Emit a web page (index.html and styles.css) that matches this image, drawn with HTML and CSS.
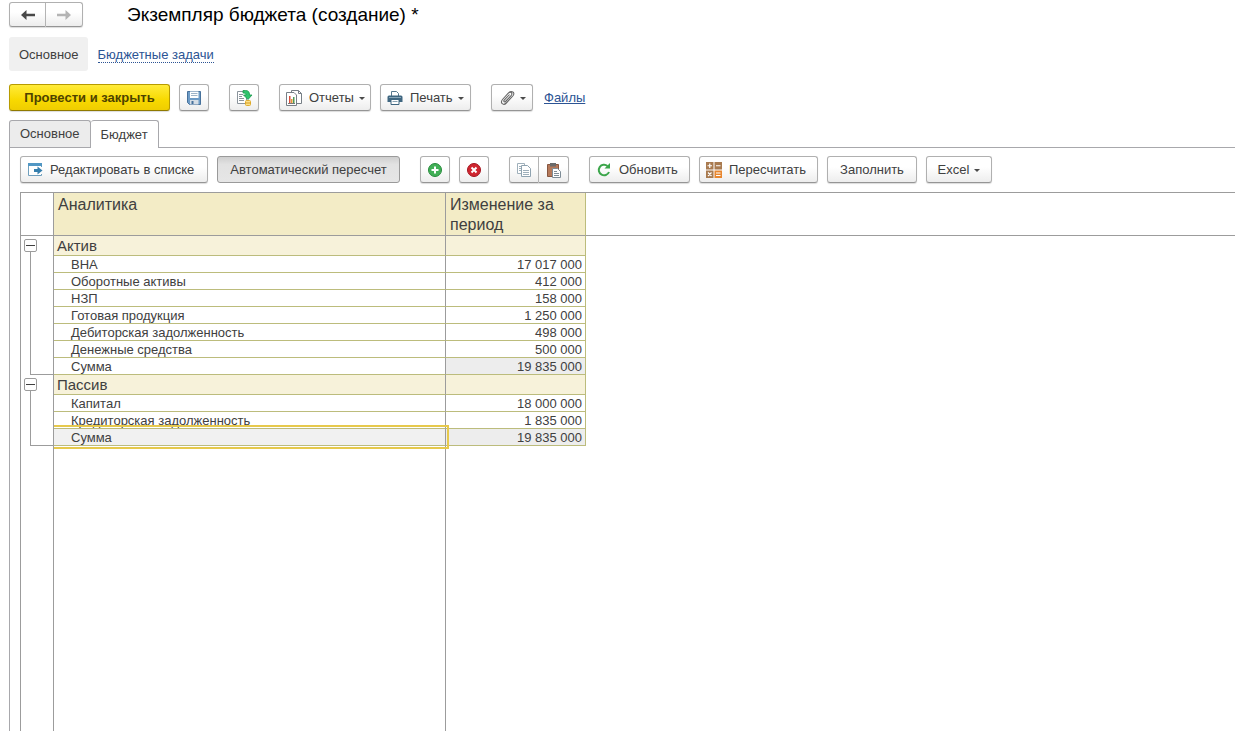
FILE: index.html
```
<!DOCTYPE html>
<html lang="ru">
<head>
<meta charset="utf-8">
<title>Экземпляр бюджета (создание) *</title>
<link rel="stylesheet" href="styles.css">
</head>
<body>
<header class="titlebar">
  <div class="btn-group">
    <button class="btn history" type="button" aria-label="Назад"><svg width="14" height="10" viewBox="0 0 14 10"><path d="M5.500 0 0 5l5.500 5V6.200H14V3.800H5.500z" fill="#484848"/></svg></button>
    <button class="btn history" type="button" aria-label="Вперед"><svg width="14" height="10" viewBox="0 0 14 10"><path d="M8.500 0 14 5l-5.500 5V6.200H0V3.800h8.500z" fill="#b4b4b4"/></svg></button>
  </div>
  <h1>Экземпляр бюджета (создание) *</h1>
</header>

<nav class="sections">
  <span class="section-current">Основное</span>
  <a href="#">Бюджетные задачи</a>
</nav>

<div class="toolbar commands">
  <button class="btn primary" type="button">Провести и закрыть</button>
  <button class="btn square" type="button" aria-label="Записать"><svg width="16" height="16" viewBox="0 0 16 16"><path d="M1.500 1.500h13v13h-11l-2-2z" fill="#6d9bc6" stroke="#47719b"/><path d="M4 1.500h8.500V8H4z" fill="#fff"/><path d="M5 3.500h6.500M5 5.500h6.500" stroke="#9fb4c8"/><path d="M4 10h8.500v4.500H4z" fill="#d5dde5"/><path d="M5.500 11h2v3h-2z" fill="#47719b"/></svg></button>
  <button class="btn square push" type="button" aria-label="Провести"><svg width="18" height="18" viewBox="0 0 18 18"><path d="M2.500 2.500h9v12h-9z" fill="#fff" stroke="#8b949c"/><path d="M4 5.500h4M4 7.500h3M4 9.500h5M4 11.500h5" stroke="#8b949c"/><path d="M8 1.500h2.500c3 0 4 1.500 4 4.500H17l-4 4.500L8.500 6H11c0-1.500-1-2-3-2z" fill="#2fc46c" stroke="#1b984d" stroke-width=".8"/><rect x="10.500" y="11.500" width="5" height="5" rx="1" fill="#fbe08a" stroke="#e0ae31"/><path d="M10.500 14h5" stroke="#d69b1e"/></svg></button>
  <button class="btn reports push" type="button"><svg width="16" height="16" viewBox="0 0 16 16"><path d="M5.500.5h7l3 3v10h-10z" fill="#fff" stroke="#777f86"/><path d="M12.500.5v3h3" fill="none" stroke="#777f86"/><path d="M.5 2.500h7.500l2.500 2.500v10.500H.5z" fill="#fff" stroke="#777f86"/><path d="M3 6h1.500v7H3z" fill="#d94d3a"/><path d="M5 9h1.500v4H5z" fill="#e39a36"/><path d="M7 7h1.500v6H7z" fill="#4e9a57"/><path d="M2 13.500h7" stroke="#777"/></svg><span>Отчеты</span><i class="caret"></i></button>
  <button class="btn print" type="button"><svg width="16" height="16" viewBox="0 0 16 16"><path d="M4.500 6V1.500h5l2 2V6" fill="#fff" stroke="#56788e"/><path d="M2 5.500h12q1.500 0 1.500 1.500V12H.5V7Q.5 5.500 2 5.500z" fill="#3f6680"/><path d="M2 7.500h12" stroke="#86a5b8"/><path d="M4 9.500h8v5H4z" fill="#fff" stroke="#3f6680"/><path d="M5.500 11.500h5" stroke="#8aa4b4"/></svg><span>Печать</span><i class="caret"></i></button>
  <button class="btn attach push" type="button" aria-label="Присоединить"><svg width="16" height="16" viewBox="0 0 16 16"><path d="M3.500 9.500l6-6.500c2-2 4.500.3 2.800 2.300L6.500 11.500c-1 1-2.300-.2-1.300-1.300L10.500 4.500M3.500 9.500c-3 3.500 1 6.500 3.800 3.500l6.500-7C17 2 12 .5 10 2.500" fill="none" stroke="#666" stroke-width="1.100"/></svg><i class="caret"></i></button>
  <a class="files" href="#">Файлы</a>
</div>

<div class="tabs" role="tablist">
  <button class="tab" type="button" role="tab" aria-selected="false">Основное</button>
  <button class="tab active" type="button" role="tab" aria-selected="true">Бюджет</button>
</div>

<main class="panel">
  <div class="toolbar">
    <button class="btn edit" type="button"><svg width="16" height="16" viewBox="0 0 16 16"><path d="M14.500 5V1.500H1.500v12h13V12" fill="#fff" stroke="#6f9fbd"/><path d="M1 1h14v3H1z" fill="#5197c4"/><path d="M7 7h3.500V4.500L15.500 8.500l-5 4V10H7z" fill="#367fae"/></svg><span>Редактировать в списке</span></button>
    <button class="btn auto pressed" type="button" aria-pressed="true">Автоматический пересчет</button>
    <button class="btn square push" type="button" aria-label="Добавить"><svg width="16" height="16" viewBox="0 0 16 16"><circle cx="8" cy="8" r="6.500" fill="#42b057" stroke="#278b3c"/><path d="M8 4.500v7M4.500 8h7" stroke="#fff" stroke-width="2"/></svg></button>
    <button class="btn square" type="button" aria-label="Удалить"><svg width="16" height="16" viewBox="0 0 16 16"><circle cx="8" cy="8" r="6.500" fill="#cf2630" stroke="#a5141e"/><path d="M5.500 5.500l5 5M10.500 5.500l-5 5" stroke="#fff" stroke-width="2"/></svg></button>
    <div class="btn-group push">
      <button class="btn square" type="button" aria-label="Копировать"><svg width="16" height="16" viewBox="0 0 16 16"><path d="M1.500 1.500h7v10h-7z" fill="#fff" stroke="#9fb0bb"/><path d="M3 4.500h3M3 6.500h3M3 8.500h3" stroke="#9fb0bb"/><path d="M5.500 3.500h6l3 3v8h-9z" fill="#fff" stroke="#8fa3b0"/><path d="M7 8.500h6M7 10.500h6M7 12.500h6" stroke="#9fb0bb"/></svg></button>
      <button class="btn square" type="button" aria-label="Вставить"><svg width="16" height="16" viewBox="0 0 16 16"><path d="M1.500 2.500h11v12h-11z" fill="#b5795a" stroke="#875640"/><path d="M4 1h6v3.500H4z" fill="#6b6b6b"/><path d="M6.500 6.500h5l3 3v6h-8z" fill="#fff" stroke="#7e8c96"/><path d="M8 9.500h3M8 11.500h5M8 13.500h5" stroke="#7e8c96"/></svg></button>
    </div>
    <button class="btn refresh push" type="button"><svg width="16" height="16" viewBox="0 0 16 16"><path d="M13 10A5.300 5.300 0 1 1 11.500 4" fill="none" stroke="#3ca64b" stroke-width="2"/><path d="M8.500 6.500h5.500V1z" fill="#3ca64b"/></svg><span>Обновить</span></button>
    <button class="btn recount" type="button"><svg width="16" height="16" viewBox="0 0 16 16"><path d="M0 0h7.500v7.500H0zM8.500 0H16v7.500H8.500zM0 8.500h7.500V16H0z" fill="#a97b50"/><path d="M8.500 8.500H16V16H8.500z" fill="#e8862e"/><path d="M3.750 1.500v4.500M1.500 3.750h4.500M10 3.750h4.500M2 10.500l3.500 3.500M5.500 10.500L2 14M10 11h4.500M10 13.500h4.500" stroke="#fff" stroke-width="1.200"/></svg><span>Пересчитать</span></button>
    <button class="btn fill" type="button">Заполнить</button>
    <button class="btn excel" type="button"><span>Excel</span><i class="caret"></i></button>
  </div>

  <div class="sheet">
    <table>
      <colgroup><col class="col-gutter"><col class="col-name"><col class="col-value"><col></colgroup>
      <thead>
        <tr><td class="gutter-head"></td><th scope="col">Аналитика</th><th scope="col">Изменение за период</th><td class="blank-head"></td></tr>
      </thead>
      <tbody>
        <tr class="group"><td class="gutter" rowspan="8"><div class="outline outline-long"><button type="button" aria-label="Свернуть Актив"></button></div></td><th scope="rowgroup">Актив</th><td></td></tr>
        <tr><td>ВНА</td><td>17 017 000</td></tr>
        <tr><td>Оборотные активы</td><td>412 000</td></tr>
        <tr><td>НЗП</td><td>158 000</td></tr>
        <tr><td>Готовая продукция</td><td>1 250 000</td></tr>
        <tr><td>Дебиторская задолженность</td><td>498 000</td></tr>
        <tr><td>Денежные средства</td><td>500 000</td></tr>
        <tr><td>Сумма</td><td class="total">19 835 000</td></tr>
      </tbody>
      <tbody>
        <tr class="group"><td class="gutter" rowspan="4"><div class="outline outline-short"><button type="button" aria-label="Свернуть Пассив"></button></div></td><th scope="rowgroup">Пассив</th><td></td></tr>
        <tr><td>Капитал</td><td>18 000 000</td></tr>
        <tr><td>Кредиторская задолженность</td><td>1 835 000</td></tr>
        <tr><td class="total selected">Сумма</td><td class="total">19 835 000</td></tr>
      </tbody>
    </table>
    <div class="sheet-rest"><div></div><div></div></div>
  </div>
</main>
</body>
</html>
```
FILE: styles.css
```
* { box-sizing: border-box; }

body {
  margin: 0;
  min-height: 100vh;
  display: flex;
  flex-direction: column;
  padding-left: 9px;
  background: #fff;
  color: #404040;
  font: 13px/16px "Liberation Sans", Arial, sans-serif;
  overflow-x: hidden;
}

button { font: inherit; color: inherit; }
a { color: #2c5494; }

.titlebar {
  display: flex;
  align-items: center;
  gap: 44px;
  padding-top: 2px;
}
h1 {
  margin: 0;
  color: #000;
  font-size: 19px;
  font-weight: 400;
  line-height: 24px;
}

.sections {
  display: flex;
  align-items: center;
  gap: 10px;
  padding: 10px 0 13px;
}
.section-current {
  padding: 10px 9px 8px 10px;
  border-radius: 3px;
  background: #f0f0f0;
}
.sections a {
  padding-top: 2px;
  border-bottom: 1px dotted #2c5494;
  line-height: 14px;
  text-decoration: none;
}

.toolbar {
  display: flex;
  align-items: center;
  gap: 9px;
}
.push { margin-left: 11px; }

.btn {
  display: flex;
  align-items: center;
  justify-content: center;
  height: 27px;
  padding: 0 6px;
  border: 1px solid #b0b0b0;
  border-bottom-color: #959595;
  border-radius: 3px;
  background: linear-gradient(#fff 40%, #ededed);
  box-shadow: 0 1px 1px #dcdcdc;
  white-space: nowrap;
}
.btn svg { flex: none; }
.btn svg + span { margin-left: 7px; }
.square { width: 30px; padding: 0; }
.history { width: 37px; height: 25px; padding: 0; }
.btn-group { display: flex; }
.btn-group .btn:first-child { border-radius: 3px 0 0 3px; }
.btn-group .btn:last-child { border-radius: 0 3px 3px 0; border-left: 0; }

.primary {
  min-width: 161px;
  border-color: #b79b00;
  border-bottom-color: #8f7900;
  background: linear-gradient(#ffeb3a, #f8d900 60%, #efcd00);
  color: #4d4200;
  font-weight: 700;
}
.reports { min-width: 92px; }
.print { min-width: 91px; }
.attach { min-width: 42px; }
.files { margin-left: 2px; }
.edit { min-width: 188px; }
.auto { min-width: 183px; }
.refresh { min-width: 101px; }
.recount { min-width: 119px; }
.fill { min-width: 90px; }
.excel { min-width: 66px; }
.edit, .refresh, .recount, .reports, .print { justify-content: flex-start; }
.pressed {
  border-color: #9a9a9a;
  background: linear-gradient(#cfcfcf, #e2e2e2 30%, #e6e6e6);
  box-shadow: none;
}

.caret {
  margin: 2px 0 0 5px;
  border: 3px solid transparent;
  border-top-color: #4a4a4a;
  border-bottom: 0;
}
.reports, .print { padding-right: 5px; }

.tabs {
  display: flex;
  padding-top: 9px;
}
.tab {
  height: 27px;
  padding: 0 10px;
  border: 1px solid #a8a8ac;
  border-bottom: 0;
  border-radius: 3px 3px 0 0;
  background: #ececec;
}
.tab + .tab { border-left: 0; }
.tab.active {
  position: relative;
  height: 28px;
  margin-bottom: -1px;
  background: #fff;
}

.panel {
  flex: 1;
  display: flex;
  flex-direction: column;
  gap: 9px;
  padding: 8px 0 0 10px;
  border: solid #a8a8ac;
  border-width: 1px 0 0 1px;
}

.sheet {
  flex: 1;
  display: flex;
  flex-direction: column;
  border: solid #9c9c9c;
  border-width: 1px 0 0 1px;
}
table {
  width: 100%;
  table-layout: fixed;
  border-collapse: separate;
  border-spacing: 0;
}
.col-gutter { width: 33px; }
.col-name { width: 392px; }
.col-value { width: 140px; }

th, td {
  padding: 0;
  border: 0 solid #bcbc7c;
  font-weight: 400;
  text-align: left;
}
thead th {
  height: 43px;
  padding: 2px 4px 0;
  border-width: 0 1px 1px 0;
  border-bottom-color: #9c9c9c;
  background: #f3ecc6;
  font-size: 16px;
  line-height: 20px;
  vertical-align: top;
}
thead th:nth-child(2) { border-right-color: #9c9c9c; }
.gutter-head { border: solid #9c9c9c; border-width: 0 1px 1px 0; }
.blank-head { border-bottom: 1px solid #9c9c9c; }

tbody td {
  height: 17px;
  padding-top: 2px;
  border-width: 0 1px 1px 0;
  line-height: 14px;
}
tbody td:nth-last-child(2) { padding-left: 17px; border-right-color: #9c9c9c; }
tbody td:last-child { padding-right: 3px; text-align: right; }
.group th, .group td:last-child {
  height: 20px;
  border-width: 0 1px 1px 0;
  background: #f7f2da;
}
.group th {
  padding-left: 3px;
  border-right-color: #9c9c9c;
  font-size: 15px;
  line-height: 19px;
}
.total { background: #ededed; }

/* Frame of the active cell, drawn over its neighbours */
.selected { position: relative; background: #f1f1f1; }
.selected::after {
  content: "";
  position: absolute;
  inset: -4px -4px -4px 0;
  border: 2px solid #e6c94c;
  border-left: 0;
}

/* Collapse button with the bracket that spans its group */
tbody .gutter {
  padding: 3px 0 0 3px;
  border-width: 0 1px 0 0;
  border-color: #9c9c9c;
  vertical-align: top;
}
.outline {
  display: flex;
  flex-direction: column;
}
.outline::after {
  content: "";
  flex: 1;
  margin-left: 6px;
  border: solid #9c9c9c;
  border-width: 0 0 1px 1px;
}
.outline-long { height: 136px; }
.outline-short { height: 68px; }
.outline button {
  display: grid;
  place-items: center;
  width: 13px;
  height: 13px;
  padding: 0;
  border: 1px solid #9c9c9c;
  border-radius: 2px;
  background: #fff;
}
.outline button::before {
  content: "";
  width: 9px;
  height: 1px;
  background: #404040;
}

.sheet-rest {
  flex: 1;
  display: grid;
  grid-template-columns: 33px 392px;
}
.sheet-rest div { border-right: 1px solid #9c9c9c; }
```
